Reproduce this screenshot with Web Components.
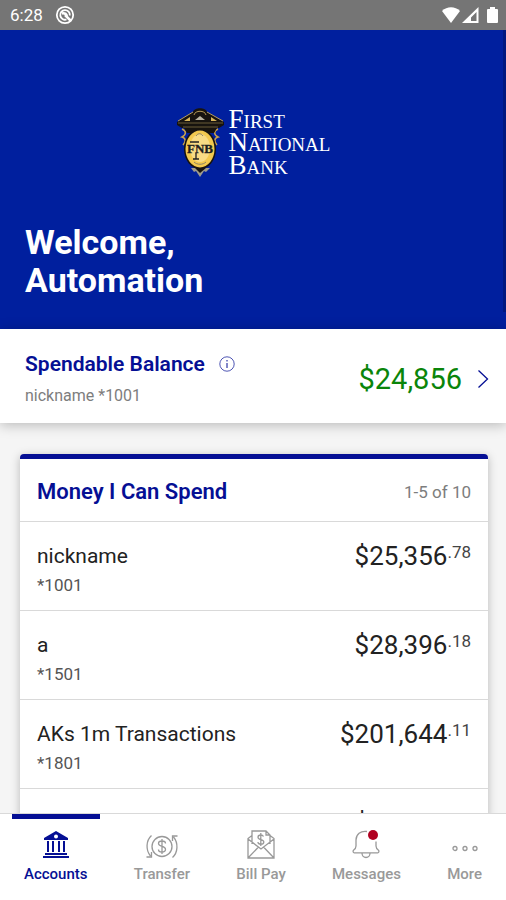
<!DOCTYPE html>
<html lang="en">
<head>
<meta charset="utf-8">
<meta name="viewport" content="width=device-width, initial-scale=1">
<title>First National Bank</title>
<style>
body {
  margin: 0;
  font-family: Roboto, "Liberation Sans", sans-serif;
  color: #222222;
  --brand: #001f9e;
  --accent: #050f94;
  --line: #d9d9d9;
  --muted: #7d7d7d;
}
</style>
</head>
<body>
<bank-app>
  <status-bar slot="status" time="6:28"></status-bar>
  <welcome-hero name="Automation"></welcome-hero>
  <spendable-balance account="nickname *1001" amount="$24,856"></spendable-balance>
  <account-card heading="Money I Can Spend" range="1-5 of 10">
    <account-row name="nickname" number="*1001" dollars="$25,356" cents=".78"></account-row>
    <account-row name="a" number="*1501" dollars="$28,396" cents=".18"></account-row>
    <account-row name="AKs 1m Transactions" number="*1801" dollars="$201,644" cents=".11"></account-row>
    <account-row name="nickname" number="*1901" dollars="$11,471" cents=".00"></account-row>
  </account-card>
  <tab-bar slot="tabs">
    <tab-item label="Accounts" active>
      <svg width="28" height="30" viewBox="0 0 28 30" fill="currentColor">
        <path fill-rule="evenodd" d="M14 1 2 8v2h24V8zM14 4.500a2 2 0 1 1 0 4 2 2 0 0 1 0-4z"/>
        <path d="M5 11h2v11H5zM10 11h2v11h-2zM16 11h2v11h-2zM21 11h2v11h-2zM3 23h22v2H3zM1 26h26v2H1z"/>
      </svg>
    </tab-item>
    <tab-item label="Transfer">
      <svg width="34" height="30" viewBox="0 0 34 30" fill="none" stroke="currentColor" stroke-width="1.300">
        <circle cx="17" cy="16.500" r="10"/>
        <path d="M20.500 13.500c0-1.500-1.500-2.500-3.500-2.500s-3.500 1-3.500 2.600c0 3.800 7 1.900 7 5.700 0 1.600-1.500 2.700-3.500 2.700s-3.500-1-3.500-2.600M17 9v15"/>
        <path d="M6.500 5.500C1 10.500.500 20 5.500 26M1.500 27h5v-5M27.500 27.500C33 22.500 33.500 13 28.500 7M32.500 6h-5v5"/>
      </svg>
    </tab-item>
    <tab-item label="Bill Pay">
      <svg width="28" height="30" viewBox="0 0 28 30" fill="none" stroke="currentColor" stroke-width="1.300">
        <path d="M5 14V1h14l4 4v9M19 1v4h4M5 5.500 1 8.500V28h26V8.500l-4-3M1 9l13 10L27 9M1 28l10.500-11M27 28 16.500 17"/>
        <path d="M16.500 6.500c-.5-1-1.500-1.500-2.700-1.500-1.600 0-2.800.8-2.800 2.200 0 3.200 5.800 1.500 5.800 4.700 0 1.400-1.300 2.300-3 2.300s-2.800-.8-3-2M13.800 3v13"/>
      </svg>
    </tab-item>
    <tab-item label="Messages" unread>
      <svg width="28" height="30" viewBox="0 0 28 30" fill="none" stroke="currentColor" stroke-width="1.300">
        <path d="M15 1.500C8.500.500 4 4.500 4 10v6c0 2-.8 3-2.500 4.200-.8.800-.4 2.600.8 2.600h23.400c1.200 0 1.600-1.800.8-2.600C24.800 19 24 18 24 16v-4.500"/>
        <path d="M10 23c0 2.600 1.800 4.500 4 4.500s4-1.900 4-4.500"/>
      </svg>
    </tab-item>
    <tab-item label="More">
      <svg width="28" height="30" viewBox="0 0 28 30" fill="none" stroke="currentColor" stroke-width="1.300">
        <circle cx="4" cy="18.500" r="2"/><circle cx="14" cy="18.500" r="2"/><circle cx="24" cy="18.500" r="2"/>
      </svg>
    </tab-item>
  </tab-bar>
</bank-app>

<script>
// small base class: clones markup into an open root and fills [data-attr] nodes
class BankElement extends HTMLElement {
  constructor() {
    super();
    const template = document.createElement("template");
    template.innerHTML = this.constructor.markup;
    this.attachShadow({ mode: "open" });
    this.shadowRoot.appendChild(template.content.cloneNode(true));
  }

  connectedCallback() {
    this.shadowRoot.querySelectorAll("[data-attr]").forEach((node) => {
      node.textContent = this.getAttribute(node.dataset.attr);
    });
  }
}

class BankApp extends BankElement {
  static markup = `
<style>
:host {
  display: flex;
  flex-direction: column;
  height: 100vh;
  background: #f5f5f5;
}
main {
  position: relative;
  flex: 1;
  min-height: 0;
  overflow: hidden;
}
.thumb {
  position: absolute;
  top: 0;
  right: 0;
  width: 3px;
  height: 36%;
  background: #001880;
}
</style>
<slot name="status"></slot>
<main>
  <slot></slot>
  <div class="thumb"></div>
</main>
<slot name="tabs"></slot>
`;
}

class StatusBar extends BankElement {
  static markup = `
<style>
:host {
  display: flex;
  align-items: center;
  gap: 12px;
  height: 30px;
  padding: 0 8px 0 10px;
  background: #757575;
  color: #ffffff;
  font-size: 17px;
}
.icons {
  display: flex;
  align-items: center;
  gap: 2px;
  margin-left: auto;
}
.icons svg:last-child {
  margin-left: 6px;
}
svg {
  display: block;
}
</style>
<span data-attr="time"></span>
<svg width="20" height="20" viewBox="0 0 20 20" fill="none" stroke="#ffffff">
  <circle cx="10" cy="10" r="8.200" stroke-width="1.800"/>
  <path stroke-width="1.800" d="M11.500 14.500a4.800 4.800 0 1 1 3.300-4"/>
  <path stroke-width="2.500" d="M7 8.500c2.500-.5 4 0 5 2.500M10 10l5.500 5.500"/>
</svg>
<div class="icons">
  <svg width="18" height="16" viewBox="0 0 18 16" fill="#ffffff"><path d="M0 4C5-1 13-1 18 4L9 16z"/></svg>
  <svg width="17" height="16" viewBox="0 0 17 16"><path fill="#ffffff" fill-rule="evenodd" d="M0 16 16.500 0v16zM9 14h5.500V5L9 10.500z"/></svg>
  <svg width="11" height="16" viewBox="0 0 11 16" fill="#ffffff"><path d="M3 0h5v2h2q1 0 1 1v12q0 1-1 1H1q-1 0-1-1V3q0-1 1-1h2z"/></svg>
</div>
`;
}

class BankLogo extends BankElement {
  static markup = `
<style>
:host {
  display: flex;
  align-items: flex-start;
  gap: 4px;
  color: #ffffff;
  font-family: "Liberation Serif", serif;
  font-size: 27px;
  line-height: 23px;
  font-variant-caps: small-caps;
}
</style>
<svg width="49" height="70" viewBox="0 0 49 70">
  <g fill="none" stroke="#c9a24a" stroke-width="1.500">
    <path d="M6 21c5 2 4 6 0 8 4 1 4 5 1 8M42 21c-5 2-4 6 0 8-4 1-4 5-1 8"/>
  </g>
  <path fill="#17130f" d="M1 14 17 4c1-5 13-5 14 0l17 10v3l-5 3H6l-5-3z"/>
  <path fill="none" stroke="#b79a58" stroke-width="1" d="M2 13 17 4M47 13 31 4M18 7c1-5 11-5 12 0"/>
  <path fill="#d9b65c" d="m8 13 6-4v4zM41 13l-6-4v4z"/>
  <path fill="#b9b3a2" d="m19 12 5-4 5 4z"/>
  <path fill="none" stroke="#6b5c39" d="M2 15h45M7 19h35"/>
  <path fill="#17130f" d="M8 20h33l-3 5H11z"/>
  <ellipse cx="24" cy="41" rx="16" ry="20" fill="#17130f"/>
  <ellipse cx="24" cy="41" rx="14.500" ry="18.500" fill="#f3c94f"/>
  <ellipse cx="24" cy="40" rx="10" ry="14" fill="#f9dc85"/>
  <path fill="none" stroke="#8b8267" stroke-width="1" d="M20 28c2-3 5-3 7 0M18 54c3 3 9 3 12 0"/>
  <path fill="#9e9a8c" d="M15 60h19l-4 4-2-1-4 6-4-6-2 1z"/>
  <path fill="#17130f" d="M19 60h11l-6 5z"/>
  <text x="24" y="45" text-anchor="middle" fill="#202020" stroke="#202020" stroke-width=".300" font-family="Liberation Serif" font-weight="700" font-size="13">FNB</text>
  <path fill="none" stroke="#202020" stroke-width="1.300" d="M20 45v6M17 51h6M14 34h9"/>
</svg>
<div>First<br>National<br>Bank</div>
`;
}

class WelcomeHero extends BankElement {
  static markup = `
<style>
:host {
  display: flex;
  flex-direction: column;
  gap: 45px;
  padding: 78px 25px 30px;
  background: var(--brand);
  color: #ffffff;
}
bank-logo {
  align-self: center;
}
h1 {
  margin: 0;
  font-size: 34px;
  line-height: 38px;
  font-weight: 700;
}
</style>
<bank-logo></bank-logo>
<h1>Welcome,<br><span data-attr="name"></span></h1>
`;
}

class SpendableBalance extends BankElement {
  static markup = `
<style>
:host {
  display: flex;
  align-items: center;
  justify-content: space-between;
  padding: 21px 17px 15px 25px;
  background: #ffffff;
  box-shadow: 0 2px 12px rgba(0, 0, 0, 0.25);
}
.title {
  display: flex;
  align-items: center;
  gap: 14px;
}
h2 {
  margin: 0;
  color: var(--accent);
  font-size: 21px;
  line-height: 28px;
  font-weight: 600;
}
p {
  margin: 6px 0 0;
  color: var(--muted);
  font-size: 16px;
  line-height: 24px;
}
button {
  padding: 0;
  border: none;
  background: none;
  color: var(--accent);
}
svg {
  display: block;
}
.amount {
  display: flex;
  align-items: center;
  gap: 15px;
  color: #0a850a;
  font-size: 29px;
  line-height: 32px;
}
</style>
<div>
  <div class="title">
    <h2>Spendable Balance</h2>
    <button aria-label="About spendable balance">
      <svg width="16" height="16" viewBox="0 0 16 16" fill="none" stroke="currentColor">
        <circle cx="8" cy="8" r="7.200" stroke-width=".700"/>
        <path d="M8 7v5M8 4v1.500"/>
      </svg>
    </button>
  </div>
  <p data-attr="account"></p>
</div>
<div class="amount">
  <span data-attr="amount"></span>
  <button aria-label="View balance details">
    <svg width="12" height="20" viewBox="0 0 12 20" fill="none" stroke="currentColor" stroke-width="1.300">
      <path d="m1.500 1.500 9 8.500-9 8.500"/>
    </svg>
  </button>
</div>
`;
}

class AccountCard extends BankElement {
  static markup = `
<style>
:host {
  display: block;
  margin: 31px 18px 0 20px;
  border-top: 5px solid var(--accent);
  border-radius: 4px;
  background: #ffffff;
  box-shadow: 0 2px 10px rgba(0, 0, 0, 0.25);
}
header {
  display: flex;
  align-items: center;
  justify-content: space-between;
  padding: 19px 17px 15px;
}
h2 {
  margin: 0;
  color: var(--accent);
  font-size: 22px;
  line-height: 28px;
  font-weight: 600;
}
span {
  color: var(--muted);
  font-size: 17px;
}
</style>
<header>
  <h2 data-attr="heading"></h2>
  <span data-attr="range"></span>
</header>
<slot></slot>
`;
}

class AccountRow extends BankElement {
  static markup = `
<style>
:host {
  display: flex;
  align-items: flex-start;
  justify-content: space-between;
  padding: 20px 17px 11px;
  border-top: 1px solid var(--line);
}
.name {
  font-size: 21px;
  line-height: 29px;
}
.number {
  color: #555555;
  font-size: 17px;
  line-height: 28px;
}
.amount {
  display: flex;
  font-size: 26px;
  line-height: 28px;
}
.cents {
  color: #444444;
  font-size: 17px;
  line-height: 20px;
}
</style>
<div>
  <div class="name" data-attr="name"></div>
  <div class="number" data-attr="number"></div>
</div>
<div class="amount"><span data-attr="dollars"></span><span class="cents" data-attr="cents"></span></div>
`;
}

class TabBar extends BankElement {
  static markup = `
<style>
:host {
  position: relative;
  display: block;
  border-top: 1px solid var(--line);
  background: #ffffff;
}
nav {
  display: flex;
  justify-content: space-between;
  padding: 0 12px;
}
</style>
<nav><slot></slot></nav>
`;
}

class TabItem extends BankElement {
  static markup = `
<style>
:host {
  display: block;
  color: #999999;
}
:host([active]) {
  color: var(--accent);
}
button {
  display: flex;
  flex-direction: column;
  align-items: center;
  gap: 4px;
  height: 86px;
  padding: 11px 12px 0;
  border: none;
  border-top: 5px solid transparent;
  background: none;
  color: inherit;
  font: 500 15px/20px Roboto, sans-serif;
}
:host([active]) button {
  border-top-color: var(--accent);
}
.icon {
  position: relative;
}
.dot {
  display: none;
  position: absolute;
  top: 0;
  right: 2px;
  width: 10px;
  height: 10px;
  border-radius: 50%;
  background: #b00020;
}
:host([unread]) .dot {
  display: block;
}
::slotted(svg) {
  display: block;
}
</style>
<button>
  <span class="icon"><slot></slot><i class="dot"></i></span>
  <span data-attr="label"></span>
</button>
`;
}

window.customElements.define("bank-app", BankApp);
window.customElements.define("status-bar", StatusBar);
window.customElements.define("bank-logo", BankLogo);
window.customElements.define("welcome-hero", WelcomeHero);
window.customElements.define("spendable-balance", SpendableBalance);
window.customElements.define("account-card", AccountCard);
window.customElements.define("account-row", AccountRow);
window.customElements.define("tab-bar", TabBar);
window.customElements.define("tab-item", TabItem);
</script>
</body>
</html>
